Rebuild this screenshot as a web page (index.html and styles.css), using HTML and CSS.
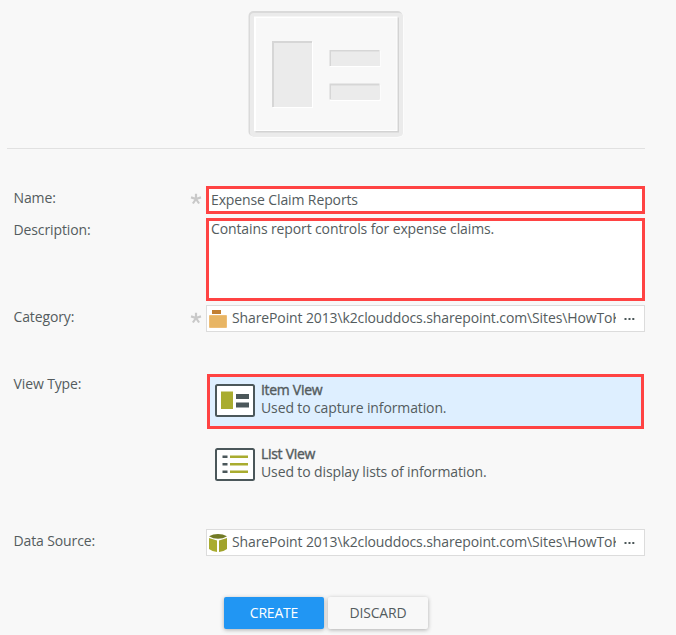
FILE: index.html
```html
<!DOCTYPE html>
<html lang="en">
<head>
<meta charset="utf-8">
<title>Create View</title>
<link rel="stylesheet" href="styles.css">
</head>
<body>
<header class="hero">
  <svg class="hero-icon" width="156" height="127" viewBox="0 0 156 127">
    <rect x="1.500" y="1.500" width="154" height="125" rx="5" fill="#fff"/>
    <rect x=".5" y="0" width="154" height="125.500" rx="5" fill="#dadada"/>
    <rect x="2" y="2" width="153" height="123.500" rx="4" fill="#ebebeb"/>
    <rect x="7.500" y="6.500" width="143.500" height="115" fill="#d3d3d3"/>
    <rect x="6" y="5.500" width="143.500" height="114.500" fill="#fff"/>
    <rect x="8" y="7" width="140.500" height="112" fill="#f8f8f8"/>
    <path d="M25 31H65V97H25Z M82 40H132.500V56H82Z M82 74H132.500V90H82Z" fill="#fff"/>
    <path d="M24 30H64V96H24Z M81.500 39H131.500V55H81.500Z M81.500 72.500H131.500V88.500H81.500Z" fill="#d6d6d6"/>
    <path d="M26 32H64V96H26Z M83 40.500H131.500V55H83Z M83 74.500H131.500V88.500H83Z" fill="#ebebeb"/>
  </svg>
</header>
<main class="form">
  <div class="row name-row">
    <label class="label">Name:</label><span class="req"><svg width="12" height="12" viewBox="0 0 12 12"><path d="M6 6V.8M6 6 1 4.400M6 6 11 4.400M6 6 2.900 10.500M6 6 9.100 10.500"/></svg></span>
    <div class="field marked name-field">Expense Claim Reports</div>
  </div>
  <div class="row desc-row">
    <label class="label">Description:</label><span></span>
    <div class="field marked desc-field">Contains report controls for expense claims.</div>
  </div>
  <div class="row category-row">
    <label class="label">Category:</label><span class="req"><svg width="12" height="12" viewBox="0 0 12 12"><path d="M6 6V.8M6 6 1 4.400M6 6 11 4.400M6 6 2.900 10.500M6 6 9.100 10.500"/></svg></span>
    <div class="field lookup">
      <svg class="lookup-icon" width="18" height="18" viewBox="0 0 18 18"><path d="M3 0H12V4H3Z" fill="#c27f31"/><rect y="5" width="18" height="13" rx="1" fill="#eebe77"/><rect x="1" y="6" width="16" height="11" fill="#e8b564"/></svg>
      <span class="path">SharePoint 2013\k2clouddocs.sharepoint.com\Sites\HowToK</span>
      <svg class="dots" width="11" height="4" viewBox="0 0 11 4"><path d="M.5 1h2v2h-2zM4.500 1h2v2h-2zM8.300 1h2v2h-2z" fill="#4c5759"/></svg>
    </div>
  </div>
  <div class="row type-row">
    <label class="label">View Type:</label><span></span>
    <div class="types">
      <div class="type selected">
        <svg width="40" height="33" viewBox="0 0 40 33"><rect x="1" y="1" width="38" height="31" rx="1.500" fill="#fff" stroke="#4b575a" stroke-width="2"/><path d="M6 7.500H18V25H6Z" fill="#a9ac2f"/><path d="M21 10H34V15H21ZM21 18.500H34V23.500H21Z" fill="#4b575a"/></svg>
        <div class="type-text"><div class="type-title">Item View</div><div>Used to capture information.</div></div>
      </div>
      <div class="type">
        <svg width="40" height="33" viewBox="0 0 40 33"><rect x="1" y="1" width="38" height="31" rx="1.500" fill="#fff" stroke="#4b575a" stroke-width="2"/><path d="M7.500 7.500H12.500V10H7.500ZM7.500 15H12.500V17.500H7.500ZM7.500 22.500H12.500V25H7.500Z" fill="#4b575a"/><path d="M15 7.500H33V10H15ZM15 15H33V17.500H15ZM15 22.500H33V25H15Z" fill="#a9ac2f"/></svg>
        <div class="type-text"><div class="type-title">List View</div><div>Used to display lists of information.</div></div>
      </div>
    </div>
  </div>
  <div class="row source-row">
    <label class="label">Data Source:</label><span></span>
    <div class="field lookup">
      <svg class="lookup-icon" width="18" height="18" viewBox="0 0 18 18"><path d="M0 2.200Q4 0 9 0T18 2.200Q14 4.800 9 4.800T0 2.200Z" fill="#727a25"/><path d="M0 4 8 6.500V18Q3 17.500 0 15Z" fill="#a9ac2f"/><path d="M18 4 10 6.500V18Q15 17.500 18 15Z" fill="#a0a32c"/></svg>
      <span class="path">SharePoint 2013\k2clouddocs.sharepoint.com\Sites\HowToK</span>
      <svg class="dots" width="11" height="4" viewBox="0 0 11 4"><path d="M.5 1h2v2h-2zM4.500 1h2v2h-2zM8.300 1h2v2h-2z" fill="#4c5759"/></svg>
    </div>
  </div>
  <div class="actions">
    <button class="btn primary">CREATE</button>
    <button class="btn">DISCARD</button>
  </div>
</main>
</body>
</html>
```
FILE: styles.css
```css
* { box-sizing: border-box; }
body {
  margin: 0;
  height: 635px;
  overflow: hidden;
  background: #f8f8f8;
  color: #545c5e;
  font: 14px/18px "Open Sans", "Noto Sans", sans-serif;
  letter-spacing: -.12px;
}
.hero {
  width: 638px;
  height: 149px;
  margin-left: 7px;
  padding: 11px 0 0 241px;
  border-bottom: 1px solid #e1e1e1;
}
.hero-icon { display: block; }
.form { width: 645px; padding: 37px 0 0 13.5px; }
.row { display: grid; grid-template-columns: 176.5px 16px 439px; }
.label { padding-top: 3px; }
.req { padding-top: 7px; }
.req svg { display: block; fill: none; stroke: #c9c9c9; stroke-width: 2.2; }
.field { background: #fff; white-space: nowrap; overflow: hidden; }
.marked { border: 3px solid #ff4343; padding-left: 2px; }
.name-field { height: 28px; padding-top: 2px; }
.desc-row { margin-top: 4px; }
.desc-field { height: 83px; line-height: 15px; }
.category-row { margin-top: 4px; }
.lookup {
  display: flex;
  align-items: center;
  height: 27px;
  border: 1px solid #dcdcdc;
  padding: 0 9px 0 2px;
}
.lookup-icon { flex: none; }
.path { width: 384px; margin: 0 8px 2px 5px; overflow: hidden; }
.dots { flex: none; }
.type-row { margin-top: 42px; }
.type-row .label { padding-top: 1px; }
.types { padding: 0 1px; }
.type { display: flex; height: 55px; padding: 8px 5px; border: 3px solid transparent; }
.type + .type { margin-top: 9px; }
.type svg { flex: none; margin-top: -1px; }
.selected { background: #deefff; border-color: #ff4343; }
.type-text { margin: -4px 0 0 6px; }
.type-title { letter-spacing: -.3px; -webkit-text-stroke: .4px #545c5e; }
.source-row { margin-top: 36px; }
.actions { display: flex; gap: 4px; margin: 41px 0 0 210.5px; }
.btn {
  width: 100px;
  height: 32px;
  padding: 0;
  border: 0;
  border-radius: 2px;
  background: #f8f8f8;
  color: inherit;
  font: inherit;
  letter-spacing: -.2px;
  box-shadow: 0 1px 4px rgba(0, 0, 0, .3);
}
.primary { background: #2196f3; color: #fff; }
```
